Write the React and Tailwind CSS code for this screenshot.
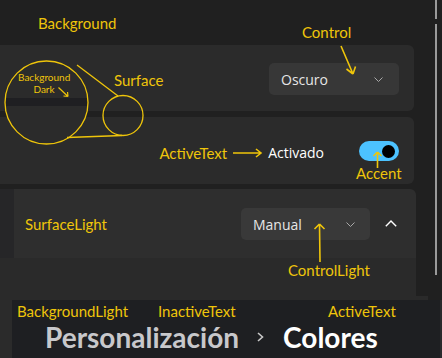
export default function App() {
  const Y = "#efc50a";
  return (
    <div className="relative w-[442px] h-[358px] overflow-hidden bg-[#202020] font-['Lato',sans-serif]">
      {/* top background */}
      <div className="flex h-[45px] text-[15px] leading-[18px] text-[#efc50a]">
        <div className="w-[302px] pl-[38px] pt-[14px]">Background</div>
        <div className="pt-[23px]">Control</div>
      </div>

      {/* card 1 */}
      <div className="flex h-[66px] w-[414px] items-center justify-end rounded-r-[6px] bg-[#2b2b2b] pr-[15px] pt-[2px]">
        <div className="flex h-[32px] w-[130px] items-center justify-between rounded-[5px] bg-[#373737] pl-[12px] pr-[16px] font-['Open_Sans',sans-serif] text-[14px] text-[#e6e6e6]">
          <span>Oscuro</span>
          <svg width="9" height="5" viewBox="0 0 9 5"><path d="M0.5 0.5 L4.5 4.5 L8.5 0.5" fill="none" stroke="#a8a8a8" strokeWidth="1" /></svg>
        </div>
      </div>

      <div className="h-[6px]" />

      {/* card 2 */}
      <div className="flex h-[67px] w-[414px] items-center justify-end rounded-r-[6px] bg-[#2b2b2b] pr-[15px] pt-[1px]">
        <span className="text-[15px] leading-[18px] text-[#efc50a] mt-[3px]">ActiveText</span>
        <svg className="ml-[6px] mt-[3px]" width="30" height="10" viewBox="0 0 30 10"><path d="M0 5 H28 M23 1 L28 5 L23 9" fill="none" stroke={Y} strokeWidth="1.6" /></svg>
        <span className="ml-[5px] mt-[2px] font-['Open_Sans',sans-serif] text-[14px] text-white">Activado</span>
        <div className="relative ml-[35px] flex h-[20px] w-[40px] items-center justify-end rounded-full bg-[#4cc2ff] pr-[4px]">
          <div className="h-[13px] w-[13px] rounded-full bg-black" />
          <span className="absolute left-[-3px] top-[23px] text-[15px] leading-[18px] text-[#efc50a]">Accent</span>
        </div>
      </div>

      <div className="h-[5px]" />

      {/* card 3 row */}
      <div className="flex h-[69px]">
        <div className="w-[14px] bg-[#262628]" />
        <div className="flex w-[402px] items-center rounded-tr-[6px] bg-[#2e2e2e] pl-[11px] pr-[19px]">
          <span className="text-[15px] leading-[18px] text-[#efc50a] mt-[1px]">SurfaceLight</span>
          <div className="ml-auto flex h-[32px] w-[129px] items-center justify-between rounded-[5px] bg-[#393939] pl-[12px] pr-[15px] font-['Open_Sans',sans-serif] text-[14px] text-[#e6e6e6] mt-[1px]">
            <span>Manual</span>
            <svg width="9" height="5" viewBox="0 0 9 5"><path d="M0.5 0.5 L4.5 4.5 L8.5 0.5" fill="none" stroke="#a8a8a8" strokeWidth="1" /></svg>
          </div>
          <svg className="ml-[15px]" width="12" height="7" viewBox="0 0 12 7"><path d="M0.8 6.2 L6 1 L11.2 6.2" fill="none" stroke="#ffffff" strokeWidth="1.4" /></svg>
        </div>
      </div>

      {/* expanded body */}
      <div className="h-[38px] w-[416px] bg-[#2a2a2a] pl-[288px] pt-[3px] text-[15px] leading-[18px] text-[#efc50a]">ControlLight</div>
      <div className="h-[4px] w-[428px] bg-[#2a2a2a]" />

      {/* bottom */}
      <div className="flex h-[58px]">
        <div className="w-[12px] bg-[#2b2b2b]" />
        <div className="flex-1 border-r-[2px] border-[#2a2a2c] bg-[#1e1f22]">
          <div className="flex h-[18px] mt-[2px] text-[15px] leading-[18px] text-[#efc50a]">
            <span className="w-[146px] pl-[5px]">BackgroundLight</span>
            <span className="w-[170px]">InactiveText</span>
            <span>ActiveText</span>
          </div>
          <div className="mt-[3px] flex items-center pl-[33px] text-[28px] leading-[28px] font-bold">
            <span className="text-[#c8c8cb]">Personalización</span>
            <svg className="ml-[18px] mr-[19px]" width="7" height="10" viewBox="0 0 7 10"><path d="M1 1 L5.5 5 L1 9" fill="none" stroke="#c8c8c8" strokeWidth="1.6" /></svg>
            <span className="text-white">Colores</span>
          </div>
        </div>
      </div>

      {/* scrollbar */}
      <div className="absolute left-[435px] top-0 h-[19px] w-[2px] bg-[#9a9a9a]" />
      <div className="absolute left-[435px] top-[24px] h-[251px] w-[2px] bg-[#9a9a9a]" />

      {/* annotation overlay */}
      <svg className="pointer-events-none absolute inset-0" width="442" height="358" viewBox="0 0 442 358">
        <defs>
          <clipPath id="bigc"><circle cx="46.5" cy="102.5" r="41.5" /></clipPath>
        </defs>
        <g clipPath="url(#bigc)">
          <rect x="0" y="60" width="100" height="90" fill="#2b2b2b" />
          <rect x="3" y="98" width="100" height="8" fill="#1f1f22" />
        </g>
        <circle cx="46.5" cy="102.5" r="41.5" fill="none" stroke={Y} strokeWidth="1.3" />
        <circle cx="123" cy="115.5" r="20" fill="none" stroke={Y} strokeWidth="1.3" />
        <line x1="77" y1="65" x2="118" y2="96" stroke={Y} strokeWidth="1.3" />
        <line x1="67" y1="137.5" x2="122" y2="135.5" stroke={Y} strokeWidth="1.3" />
        {/* Background Dark arrow */}
        <path d="M58.5 87.5 L68 96.5 M68 96.5 L63.5 96 M68 96.5 L67.5 92" fill="none" stroke={Y} strokeWidth="1.2" />
        {/* Control arrow */}
        <path d="M341 46 L353 74 M353 74 L346.5 69 M353 74 L355.5 66.5" fill="none" stroke={Y} strokeWidth="1.6" />
        {/* Accent arrow */}
        <path d="M377.5 168 L377.5 152 M377.5 152 L373.5 156 M377.5 152 L381.5 156" fill="none" stroke={Y} strokeWidth="1.6" />
        {/* ControlLight arrow */}
        <path d="M320 262 L319.5 224 M319.5 224 L314.5 229 M319.5 224 L324.5 229" fill="none" stroke={Y} strokeWidth="1.6" />
      </svg>

      {/* annotation labels on canvas */}
      <span className="absolute left-[114px] top-[71px] text-[15px] leading-[18px] text-[#efc50a]">Surface</span>
      <div className="absolute left-[18px] top-[71px] w-[52px] text-center text-[10px] leading-[12px] text-[#efc50a]">
        Background
        <div>Dark</div>
      </div>
    </div>
  );
}
